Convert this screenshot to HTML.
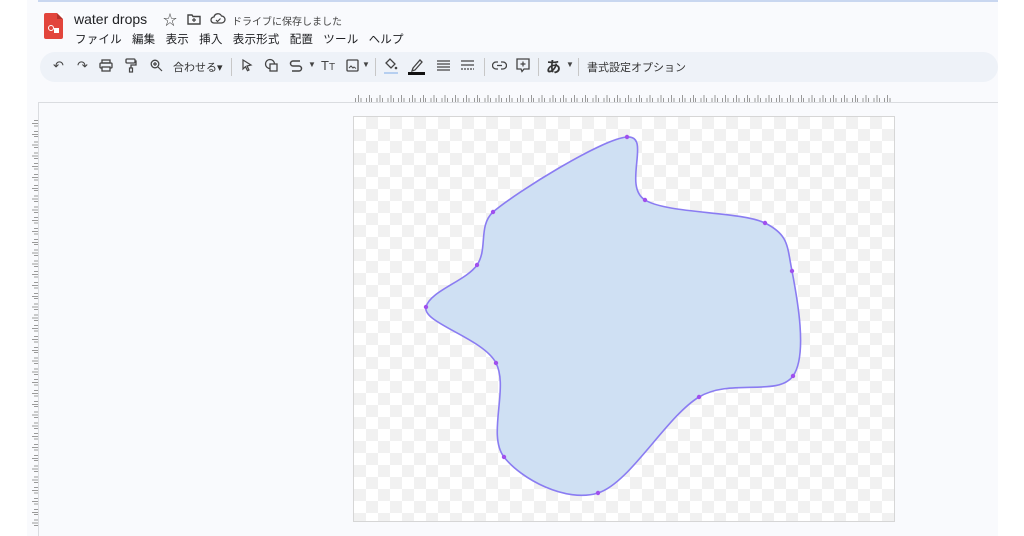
<!DOCTYPE html>
<html><head><meta charset="utf-8">
<style>
*{margin:0;padding:0;box-sizing:border-box}
body{width:1024px;height:536px;overflow:hidden;background:#fff;font-family:"Liberation Sans","Noto Sans CJK JP",sans-serif;position:relative;color:#202124}
.bg{position:absolute;left:27px;top:0;width:971px;height:536px;background:#f9fafd}
.topline{position:absolute;left:38px;top:0;width:960px;height:2px;background:#c9d7f0}
.logo{position:absolute;left:44px;top:13px;width:19px;height:26px;background:#e2453c;border-radius:2px}
.logo:after{content:"";position:absolute;right:0;top:0;border-style:solid;border-width:0 6px 6px 0;border-color:#fff #fff #b5332c #b5332c}
.t{position:absolute;white-space:nowrap}
.tb{position:absolute;left:40px;top:52px;width:958px;height:30px;background:#eef2f8;border-radius:15px}
.ic{position:absolute;font-size:12px;color:#444}
.sep{position:absolute;top:58px;width:1px;height:18px;background:#c7c7c7}
.ruler{position:absolute;left:355px;top:98px;width:538px;height:4px;background:repeating-linear-gradient(90deg,#999 0 1px,transparent 1px 5.4px)}
.ruler2{position:absolute;left:358px;top:95px;width:538px;height:7px;background:repeating-linear-gradient(90deg,#999 0 1px,transparent 1px 10.8px)}
.hline{position:absolute;left:38px;top:102px;width:960px;height:1px;background:#dadce0}
.vline{position:absolute;left:38px;top:102px;width:1px;height:434px;background:#dadce0}
.lruler{position:absolute;left:34px;top:120px;width:4px;height:410px;background:repeating-linear-gradient(180deg,#999 0 1px,transparent 1px 5.4px)}
.lruler2{position:absolute;left:32px;top:123px;width:6px;height:410px;background:repeating-linear-gradient(180deg,#999 0 1px,transparent 1px 10.8px)}
.canvas{position:absolute;left:353px;top:116px;width:542px;height:406px;border:1px solid #d6d6d6;
background-color:#fff;background-image:linear-gradient(45deg,#f1f1f1 25%,transparent 25%,transparent 75%,#f1f1f1 75%),linear-gradient(45deg,#f1f1f1 25%,transparent 25%,transparent 75%,#f1f1f1 75%);background-size:24px 24px;background-position:0 0,12px 12px}
</style></head><body>
<div class="bg"></div>
<div class="topline"></div>
<div class="logo"><div style="position:absolute;left:4px;top:12px;width:6px;height:6px;border:1.5px solid #fff;border-radius:50%"></div><div style="position:absolute;left:10px;top:15px;width:5px;height:5px;background:#fff"></div></div>
<div class="t" style="left:74px;top:11px;font-size:14px">water drops</div>
<div class="t" style="left:163px;top:10px;font-size:14px;color:#444">☆</div>
<svg style="position:absolute;left:187px;top:13px" width="14" height="12"><path d="M1 2h4l1 1.5h7v7.5h-12z" fill="none" stroke="#444" stroke-width="1.4"/><path d="M7 5v4M5 7h4" stroke="#444" stroke-width="1.2"/></svg>
<svg style="position:absolute;left:210px;top:13px" width="16" height="12"><path d="M4 10a3 3 0 010-6 4 4 0 017.5-1 3 3 0 010 7z" fill="none" stroke="#444" stroke-width="1.3"/><path d="M6 7l1.5 1.5 3-3" fill="none" stroke="#444" stroke-width="1.2"/></svg>
<div class="t" style="left:232px;top:13px;font-size:10px;color:#444">ドライブに保存しました</div>
<div class="t" style="left:75px;top:31px;font-size:11.5px;letter-spacing:0.2px">ファイル&nbsp;&nbsp;&nbsp;編集&nbsp;&nbsp;&nbsp;表示&nbsp;&nbsp;&nbsp;挿入&nbsp;&nbsp;&nbsp;表示形式&nbsp;&nbsp;&nbsp;配置&nbsp;&nbsp;&nbsp;ツール&nbsp;&nbsp;&nbsp;ヘルプ</div>
<div class="tb"></div>
<div class="ic" style="left:53px;top:58px;font-size:13px">↶</div>
<div class="ic" style="left:77px;top:58px;font-size:13px">↷</div>
<svg style="position:absolute;left:99px;top:59px" width="14" height="13"><rect x="3" y="1" width="8" height="3" fill="none" stroke="#444" stroke-width="1.3"/><rect x="1" y="4" width="12" height="5" rx="1" fill="none" stroke="#444" stroke-width="1.3"/><rect x="3" y="8" width="8" height="4" fill="#eef2f8" stroke="#444" stroke-width="1.3"/></svg>
<svg style="position:absolute;left:125px;top:58px" width="12" height="15"><rect x="1" y="1" width="9" height="4" rx="1" fill="none" stroke="#444" stroke-width="1.3"/><path d="M10 3h1v4h-5v3" fill="none" stroke="#444" stroke-width="1.3"/><rect x="4.5" y="10" width="3" height="4" fill="none" stroke="#444" stroke-width="1.2"/></svg>
<svg style="position:absolute;left:150px;top:59px" width="13" height="13"><circle cx="5" cy="5" r="3.8" fill="none" stroke="#444" stroke-width="1.3"/><path d="M8 8l4 4M5 3v4M3 5h4" stroke="#444" stroke-width="1.2"/></svg>
<div class="t" style="left:173px;top:59px;font-size:11px;color:#333">合わせる▾</div>
<div class="sep" style="left:231px"></div>
<svg style="position:absolute;left:241px;top:59px" width="12" height="13"><path d="M2 1l8 5-4 1 2 4-1.5.7-2-4L2 10z" fill="none" stroke="#444" stroke-width="1.2"/></svg>
<svg style="position:absolute;left:264px;top:58px" width="15" height="14"><circle cx="6" cy="6" r="4.5" fill="none" stroke="#444" stroke-width="1.3"/><rect x="6" y="6" width="7" height="7" fill="#eef2f8" stroke="#444" stroke-width="1.3"/></svg>
<svg style="position:absolute;left:289px;top:59px" width="14" height="13"><path d="M11 2H4a2.5 2.5 0 000 5h6a2.5 2.5 0 010 5H3" fill="none" stroke="#444" stroke-width="1.5"/></svg>
<div class="ic" style="left:308px;top:60px;font-size:8px">▼</div>
<div class="t" style="left:321px;top:58px;font-size:13px;color:#444">T<span style="font-size:10px">T</span></div>
<svg style="position:absolute;left:346px;top:59px" width="13" height="13"><rect x="1" y="1" width="11" height="11" rx="1" fill="none" stroke="#444" stroke-width="1.3"/><path d="M3 9l2-2 2 2 1-1 2 1.5" fill="none" stroke="#444"/></svg>
<div class="ic" style="left:362px;top:60px;font-size:8px">▼</div>
<div class="sep" style="left:375px"></div>
<svg style="position:absolute;left:383px;top:57px" width="16" height="18"><path d="M3 6l4-4 5 5-4 4z" fill="none" stroke="#444" stroke-width="1.3"/><circle cx="13" cy="11" r="1.3" fill="#444"/><rect x="1" y="15" width="14" height="2" fill="#b6cff0"/></svg>
<svg style="position:absolute;left:408px;top:57px" width="18" height="19"><path d="M5 11l7-8 2 2-7 8-3 1z" fill="none" stroke="#444" stroke-width="1.3"/><rect x="0" y="15" width="17" height="3" fill="#111"/></svg>
<svg style="position:absolute;left:437px;top:60px" width="13" height="11"><path d="M0 1h13M0 4h13M0 7h13M0 10h13" stroke="#444" stroke-width="1.3"/></svg>
<svg style="position:absolute;left:461px;top:60px" width="13" height="11"><path d="M0 1h13M0 5h13" stroke="#444" stroke-width="1.3"/><path d="M0 9h13" stroke="#444" stroke-width="1.3" stroke-dasharray="2 1"/></svg>
<div class="sep" style="left:484px"></div>
<svg style="position:absolute;left:492px;top:61px" width="15" height="9"><path d="M6 1H4a3.5 3.5 0 000 7h2M9 1h2a3.5 3.5 0 010 7H9M5 4.5h5" fill="none" stroke="#444" stroke-width="1.3"/></svg>
<svg style="position:absolute;left:516px;top:58px" width="14" height="15"><path d="M1 1h12v10H8l-2 2.5-1-2.5H1z" fill="none" stroke="#444" stroke-width="1.3"/><path d="M7 3.5v5M4.5 6h5" stroke="#444" stroke-width="1.2"/></svg>
<div class="sep" style="left:538px"></div>
<div class="t" style="left:546px;top:56px;font-size:15px;font-weight:bold;color:#333">あ</div>
<div class="ic" style="left:566px;top:60px;font-size:8px">▼</div>
<div class="sep" style="left:578px"></div>
<div class="t" style="left:587px;top:59px;font-size:11px;color:#333">書式設定オプション</div>
<div class="ruler"></div>
<div class="ruler2"></div>
<div class="hline"></div>
<div class="vline"></div>
<div class="lruler"></div>
<div class="lruler2"></div>
<div class="canvas"></div>
<svg style="position:absolute;left:0;top:0" width="1024" height="536">
<path d="M627 137C652 135 622 186 645 200C668 214 740 211 765 223C789 235 787 246 792 271C797 297 808 355 793 376C778 397 731 378 699 397C666 417 630 483 598 493C566 503 521 479 504 457C487 435 509 388 496 363C483 338 422 323 426 307C430 291 466 281 477 265C488 249 478 226 493 212C518 191 602 139 627 137Z" fill="#cfe0f3" stroke="#8a7cf2" stroke-width="1.6"/>
<g fill="#a050ee">
<circle cx="627" cy="137" r="2.2"/><circle cx="645" cy="200" r="2.2"/><circle cx="765" cy="223" r="2.2"/><circle cx="792" cy="271" r="2.2"/><circle cx="793" cy="376" r="2.2"/><circle cx="699" cy="397" r="2.2"/><circle cx="598" cy="493" r="2.2"/><circle cx="504" cy="457" r="2.2"/><circle cx="496" cy="363" r="2.2"/><circle cx="426" cy="307" r="2.2"/><circle cx="477" cy="265" r="2.2"/><circle cx="493" cy="212" r="2.2"/>
</g>
</svg>
</body></html>
